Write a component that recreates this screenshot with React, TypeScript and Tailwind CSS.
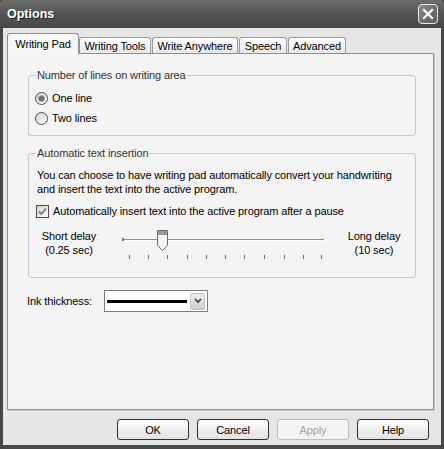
import { ReactNode } from 'react'

function Radio({ checked, label }: { checked?: boolean; label: string }) {
  return (
    <div className="flex items-center h-[14px]">
      <span className="w-[13px] h-[13px] rounded-full border border-[#4d4d4d] bg-gradient-to-br from-[#d6d6d6] to-[#fbfbfb] flex items-center justify-center">
        {checked && <span className="w-[5px] h-[5px] rounded-full bg-[#6a6a6a] ring-1 ring-[#a8a8a8]" />}
      </span>
      <span className="ml-[4px]">{label}</span>
    </div>
  )
}

function Group({ title, children, className = '' }: { title: string; children: ReactNode; className?: string }) {
  return (
    <fieldset className={`border border-[#c9c9c9] rounded-[3px] px-[7px] ml-[20px] mr-[17px] ${className}`}>
      <legend className="px-[1px] text-[#333]">{title}</legend>
      {children}
    </fieldset>
  )
}

function Button({ label, disabled }: { label: string; disabled?: boolean }) {
  return (
    <div
      className={`w-[72px] h-[21px] rounded-[3px] border flex items-center justify-center ${
        disabled
          ? 'border-[#bdbdbd] bg-[#f3f3f3] text-[#a3a3a3]'
          : 'border-[#2f2f2f] bg-gradient-to-b from-white to-[#e2e2e2] text-black'
      }`}
    >
      {label}
    </div>
  )
}

const ticks = [10, 29, 48, 68, 87, 106, 125, 145, 165, 184, 202]

function DelaySlider() {
  return (
    <svg width="210" height="31" viewBox="0 0 210 31" className="ml-[17px]">
      <line x1="4" y1="10.5" x2="205" y2="10.5" stroke="#8e8e8e" strokeWidth="1" />
      <line x1="4" y1="11.5" x2="205" y2="11.5" stroke="#ffffff" strokeWidth="1" />
      <rect x="3" y="9" width="2" height="3" fill="#777" />
      {ticks.map((x) => (
        <line key={x} x1={x + 0.5} y1="26" x2={x + 0.5} y2="30" stroke="#6f6f6f" strokeWidth="1" />
      ))}
      <path d="M38.5 1.5 H48.5 V16.5 L43.5 21.5 L38.5 16.5 Z" fill="#f4f4f4" stroke="#6c6c6c" strokeWidth="1" />
      <rect x="39" y="2" width="9" height="4" fill="#9a9a9a" />
    </svg>
  )
}

export default function App() {
  const tabs = [
    { label: 'Writing Pad', w: 'w-[72px]' },
    { label: 'Writing Tools', w: 'w-[72px]' },
    { label: 'Write Anywhere', w: 'w-[86px] ml-[1px]' },
    { label: 'Speech', w: 'w-[48px] ml-[1px]' },
    { label: 'Advanced', w: 'w-[58px] ml-[1px]' },
  ]

  return (
    <div className="w-[444px] h-[449px] bg-[#474747] flex flex-col pl-[3px] pr-[3px] pb-[4px] font-['Liberation_Sans',Arial,sans-serif] text-[11px] leading-[14px] tracking-[-0.12px] text-black">
      {/* title bar */}
      <div className="h-[28px] flex items-center bg-gradient-to-b from-[#6c6c6c] via-[#555] to-[#474747] -mx-[3px] px-[7px] rounded-t-[4px]">
        <span className="text-white font-bold text-[12.5px] tracking-normal [text-shadow:1px_1px_0_#222]">Options</span>
        <div className="ml-auto mr-[-1px] w-[20px] h-[20px] rounded-[4px] border border-[#e8e8e8] bg-gradient-to-br from-[#8a8a8a] to-[#5a5a5a] flex items-center justify-center">
          <svg width="12" height="12" viewBox="0 0 12 12">
            <path d="M2 2 L10 10 M10 2 L2 10" stroke="white" strokeWidth="2.2" strokeLinecap="square" />
          </svg>
        </div>
      </div>

      {/* body */}
      <div className="flex-1 bg-[#e6e6e6] flex flex-col pl-[4px] pr-[7px] pt-[5px]">
        <div className="flex items-end h-[20px]">
          {tabs.map((t, i) =>
            i === 0 ? (
              <div
                key={t.label}
                className={`${t.w} h-[21px] -mb-[1px] relative z-10 bg-[#f6f6f6] border border-b-0 border-[#8f8f8f] rounded-t-[3px] flex items-center justify-center pb-[1px]`}
              >
                {t.label}
              </div>
            ) : (
              <div
                key={t.label}
                className={`${t.w} h-[16px] bg-gradient-to-b from-white to-[#e9e9e9] border border-b-0 border-[#9a9a9a] rounded-t-[3px] flex items-center justify-center`}
              >
                {t.label}
              </div>
            ),
          )}
        </div>

        <div className="h-[357px] bg-[#f4f4f4] border border-[#8f8f8f] shadow-[1px_1px_0_#c8c8c8] flex flex-col">
          <Group title="Number of lines on writing area" className="mt-[14px] pt-[9px] pb-[10px]">
            <div className="flex flex-col gap-[6px] -ml-[1px]">
              <Radio checked label="One line" />
              <Radio label="Two lines" />
            </div>
          </Group>

          <Group title="Automatic text insertion" className="mt-[10px] pt-[9px] pb-[17px]">
            <p className="leading-[13.5px] pl-[1px]">
              You can choose to have writing pad automatically convert your handwriting
              <br />
              and insert the text into the active program.
            </p>
            <div className="flex items-center h-[14px] mt-[8px]">
              <span className="w-[13px] h-[13px] border border-[#4d4d4d] bg-gradient-to-br from-[#d6d6d6] to-[#fbfbfb] flex items-center justify-center">
                <svg width="9" height="9" viewBox="0 0 9 9">
                  <path d="M1 4.5 L3.5 7 L8 1.5" fill="none" stroke="#7a7a7a" strokeWidth="1.8" />
                </svg>
              </span>
              <span className="ml-[4px]">Automatically insert text into the active program after a pause</span>
            </div>
            <div className="flex items-start mt-[11px]">
              <div className="w-[66px] text-center">
                Short delay
                <br />
                (0.25 sec)
              </div>
              <DelaySlider />
              <div className="w-[56px] ml-[17px] text-center">
                Long delay
                <br />
                (10 sec)
              </div>
            </div>
          </Group>

          <div className="flex items-center mt-[12px] ml-[19px]">
            <span className="w-[77px]">Ink thickness:</span>
            <div className="w-[104px] h-[22px] border border-[#7c7c7c] bg-white flex items-center pl-[2px] pr-[2px]">
              <div className="flex-1 h-[3px] bg-black mr-[3px]" />
              <div className="w-[15px] h-[17px] rounded-[2px] border border-[#c2c2c2] bg-gradient-to-b from-[#ececec] to-[#cfcfcf] flex items-center justify-center">
                <svg width="8" height="6" viewBox="0 0 8 6">
                  <path d="M1 1 L4 4 L7 1" fill="none" stroke="#3a3a3a" strokeWidth="1.6" />
                </svg>
              </div>
            </div>
          </div>
        </div>

        <div className="flex justify-end gap-[8px] pr-[5px] mt-[9px]">
          <Button label="OK" />
          <Button label="Cancel" />
          <Button label="Apply" disabled />
          <Button label="Help" />
        </div>
      </div>
    </div>
  )
}
